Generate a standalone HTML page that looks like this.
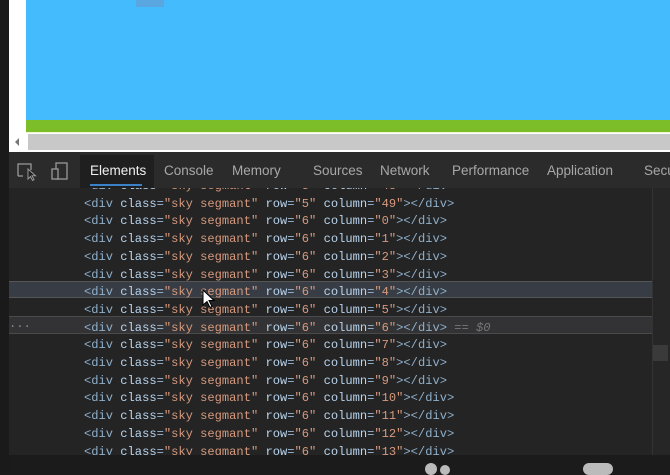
<!DOCTYPE html>
<html><head><style>
*{margin:0;padding:0;box-sizing:border-box}
body{width:670px;height:472px;overflow:hidden;background:#1b1b1b;position:relative;font-family:"Liberation Sans",sans-serif}
.a{position:absolute}
.code{font-family:"Liberation Mono",monospace;font-size:12.1px;white-space:pre;color:#9ab8d6}
.t{color:#8fb0cc}.n{color:#b8d4ee}.v{color:#d79a7e}
</style></head><body>
<div class="a" style="left:0;top:0;width:9px;height:472px;background:#1a1a1a"></div>
<div class="a" style="left:9px;top:0;width:661px;height:152px;background:#fff"></div>
<div class="a" style="left:26px;top:0;width:644px;height:120px;background:#44bbfc"></div>
<div class="a" style="left:136px;top:0;width:28px;height:7px;background:#5aa6e0"></div>
<div class="a" style="left:26px;top:120px;width:644px;height:12px;background:#7cbd2a"></div>
<div class="a" style="left:26px;top:132px;width:644px;height:1px;background:#eef6d0"></div>
<div class="a" style="left:28px;top:134px;width:642px;height:16px;background:#c8c8c8"></div>
<div class="a" style="left:15px;top:138px;width:0;height:0;border-top:4px solid transparent;border-bottom:4px solid transparent;border-right:4px solid #777"></div>
<div class="a" style="left:9px;top:152px;width:661px;height:36px;background:#2b2b2b"></div>
<svg class="a" style="left:16px;top:160px" width="56" height="22" viewBox="0 0 56 22">
<path d="M2 16V4h13v6" fill="none" stroke="#999" stroke-width="1.3"/>
<path d="M2 16h5" stroke="#999" stroke-width="1.3"/>
<path d="M12 9l0 10 2.5-2.5 2 4 1.5-.8-2-4h3.5z" fill="#1f1f1f" stroke="#999" stroke-width="1"/>
<rect x="40" y="3" width="11" height="16" fill="none" stroke="#999" stroke-width="1.3"/>
<rect x="36" y="9" width="6" height="10" fill="#2b2b2b" stroke="#999" stroke-width="1.3"/>
</svg>
<div class="a" style="left:80px;top:155px;width:74px;height:33px;background:#1f1f1f"></div>
<div class="a" style="left:90px;top:184px;width:52px;height:2px;background:#3a82c8"></div>
<div class="a" style="top:163px;font-size:13.5px;color:#a8a8a8;white-space:nowrap">
<span class="a" style="left:90px;color:#f0f0f0">Elements</span>
<span class="a" style="left:164px">Console</span>
<span class="a" style="left:232px">Memory</span>
<span class="a" style="left:313px">Sources</span>
<span class="a" style="left:380px">Network</span>
<span class="a" style="left:452px">Performance</span>
<span class="a" style="left:547px">Application</span>
<span class="a" style="left:644px">Security</span>
</div>
<div class="a" style="left:9px;top:188px;width:661px;height:267px;background:#242424;overflow:hidden">
<div class="a" style="left:0;top:93px;width:643px;height:17px;background:#383c44;border-top:1px solid #555;border-bottom:1px solid #555"></div>
<div class="a" style="left:0;top:128px;width:643px;height:18px;background:#333335;border-top:1px solid #4a4a4a;border-bottom:1px solid #4a4a4a"></div>
<div class="a" style="left:643px;top:0;width:18px;height:267px;background:#262626;border-left:1px solid #333"></div>
<div class="a" style="left:644px;top:157px;width:15px;height:16px;background:#3a3a3a"></div>
<div class="a code" style="left:0px;top:129px;color:#888">...</div>
<div class="a code" style="left:75px;top:-27.7px;line-height:17.7px">
<span class="t">&lt;div </span><span class="n">class</span>=<span class="v">"sky segmant"</span> <span class="n">row</span>=<span class="v">"5"</span> <span class="n">column</span>=<span class="v">"48"</span><span class="t">&gt;&lt;/div&gt;</span>
<span class="t">&lt;div </span><span class="n">class</span>=<span class="v">"sky segmant"</span> <span class="n">row</span>=<span class="v">"5"</span> <span class="n">column</span>=<span class="v">"49"</span><span class="t">&gt;&lt;/div&gt;</span>
<span class="t">&lt;div </span><span class="n">class</span>=<span class="v">"sky segmant"</span> <span class="n">row</span>=<span class="v">"6"</span> <span class="n">column</span>=<span class="v">"0"</span><span class="t">&gt;&lt;/div&gt;</span>
<span class="t">&lt;div </span><span class="n">class</span>=<span class="v">"sky segmant"</span> <span class="n">row</span>=<span class="v">"6"</span> <span class="n">column</span>=<span class="v">"1"</span><span class="t">&gt;&lt;/div&gt;</span>
<span class="t">&lt;div </span><span class="n">class</span>=<span class="v">"sky segmant"</span> <span class="n">row</span>=<span class="v">"6"</span> <span class="n">column</span>=<span class="v">"2"</span><span class="t">&gt;&lt;/div&gt;</span>
<span class="t">&lt;div </span><span class="n">class</span>=<span class="v">"sky segmant"</span> <span class="n">row</span>=<span class="v">"6"</span> <span class="n">column</span>=<span class="v">"3"</span><span class="t">&gt;&lt;/div&gt;</span>
<span class="t">&lt;div </span><span class="n">class</span>=<span class="v">"sky segmant"</span> <span class="n">row</span>=<span class="v">"6"</span> <span class="n">column</span>=<span class="v">"4"</span><span class="t">&gt;&lt;/div&gt;</span>
<span class="t">&lt;div </span><span class="n">class</span>=<span class="v">"sky segmant"</span> <span class="n">row</span>=<span class="v">"6"</span> <span class="n">column</span>=<span class="v">"5"</span><span class="t">&gt;&lt;/div&gt;</span>
<span class="t">&lt;div </span><span class="n">class</span>=<span class="v">"sky segmant"</span> <span class="n">row</span>=<span class="v">"6"</span> <span class="n">column</span>=<span class="v">"6"</span><span class="t">&gt;&lt;/div&gt;</span><span style="color:#777;font-style:italic"> == $0</span>
<span class="t">&lt;div </span><span class="n">class</span>=<span class="v">"sky segmant"</span> <span class="n">row</span>=<span class="v">"6"</span> <span class="n">column</span>=<span class="v">"7"</span><span class="t">&gt;&lt;/div&gt;</span>
<span class="t">&lt;div </span><span class="n">class</span>=<span class="v">"sky segmant"</span> <span class="n">row</span>=<span class="v">"6"</span> <span class="n">column</span>=<span class="v">"8"</span><span class="t">&gt;&lt;/div&gt;</span>
<span class="t">&lt;div </span><span class="n">class</span>=<span class="v">"sky segmant"</span> <span class="n">row</span>=<span class="v">"6"</span> <span class="n">column</span>=<span class="v">"9"</span><span class="t">&gt;&lt;/div&gt;</span>
<span class="t">&lt;div </span><span class="n">class</span>=<span class="v">"sky segmant"</span> <span class="n">row</span>=<span class="v">"6"</span> <span class="n">column</span>=<span class="v">"10"</span><span class="t">&gt;&lt;/div&gt;</span>
<span class="t">&lt;div </span><span class="n">class</span>=<span class="v">"sky segmant"</span> <span class="n">row</span>=<span class="v">"6"</span> <span class="n">column</span>=<span class="v">"11"</span><span class="t">&gt;&lt;/div&gt;</span>
<span class="t">&lt;div </span><span class="n">class</span>=<span class="v">"sky segmant"</span> <span class="n">row</span>=<span class="v">"6"</span> <span class="n">column</span>=<span class="v">"12"</span><span class="t">&gt;&lt;/div&gt;</span>
<span class="t">&lt;div </span><span class="n">class</span>=<span class="v">"sky segmant"</span> <span class="n">row</span>=<span class="v">"6"</span> <span class="n">column</span>=<span class="v">"13"</span><span class="t">&gt;&lt;/div&gt;</span></div>
</div>
<svg class="a" style="left:202px;top:289px" width="14" height="20" viewBox="0 0 14 20"><path d="M1 1v15l4-3.5 3 6 2-1-3-6h5z" fill="#fff" stroke="#000" stroke-width="1"/></svg>
<div class="a" style="left:425px;top:463px;width:12px;height:12px;border-radius:6px;background:#bbb"></div>
<div class="a" style="left:440px;top:465px;width:10px;height:10px;border-radius:5px;background:#bbb"></div>
<div class="a" style="left:583px;top:463px;width:30px;height:12px;border-radius:6px;background:#bbb"></div>
</body></html>
